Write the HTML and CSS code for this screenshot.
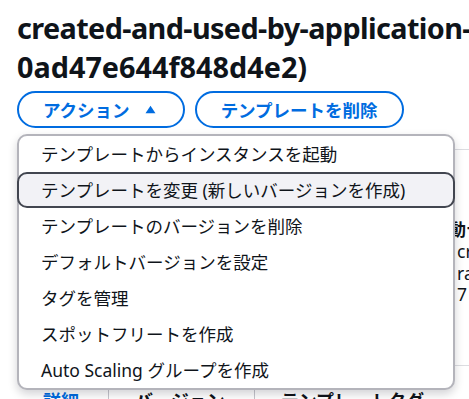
FILE: index.html
```html
<!DOCTYPE html>
<html lang="ja">

<head>
    <meta charset="UTF-8">
    <meta name="viewport" content="width=device-width, initial-scale=1.0">
    <title>起動テンプレート</title>
    <link rel="stylesheet" href="styles.css">
</head>

<body>

    <div class="page">
        <h1 class="title"><span class="title-line">created-and-used-by-application-</span><br>0ad47e644f848d4e2)</h1>

        <div class="actions">
            <button class="btn">
                アクション
                <svg class="caret" width="17" height="17" viewBox="0 0 16 16">
                    <polygon points="3.3,11.5 8,4.5 12.7,11.5" fill="currentColor" />
                </svg>
            </button>
            <button class="btn">テンプレートを削除</button>
        </div>

        <div class="content">
            <!-- Details panel behind the open menu -->
            <div class="panel">
                <h2 class="panel-title">起動テンプレートの詳細</h2>
                <div class="details">
                    <div class="kv">
                        <div class="kv-label">起動テンプレート ID</div>
                        <div class="kv-value">lt-0ad47e644f848d4e2</div>
                    </div>
                    <div class="kv">
                        <div class="kv-label">起動テンプレート名</div>
                        <div class="kv-value">created-and-used-by</div>
                    </div>
                    <div class="kv">
                        <div class="kv-label">起動テンプレートの所有者</div>
                        <div class="kv-list">
                            <div>created-and-used-by-application</div>
                            <div>raw-template</div>
                            <div>7</div>
                        </div>
                    </div>
                </div>
            </div>

            <div class="tabs">
                <div class="tab active">詳細</div>
                <div class="tab">バージョン</div>
                <div class="tab">テンプレートタグ</div>
            </div>

            <!-- Dropdown opened from the action button -->
            <ul class="menu">
                <li class="menu-item">テンプレートからインスタンスを起動</li>
                <li class="menu-item highlighted">テンプレートを変更 (新しいバージョンを作成)</li>
                <li class="menu-item">テンプレートのバージョンを削除</li>
                <li class="menu-item">デフォルトバージョンを設定</li>
                <li class="menu-item">タグを管理</li>
                <li class="menu-item">スポットフリートを作成</li>
                <li class="menu-item">Auto Scaling グループを作成</li>
            </ul>
        </div>
    </div>

</body>

</html>
```

FILE: styles.css
```css
html,
body {
    margin: 0;
    padding: 0;
    overflow: hidden;
}

body {
    font-family: "Noto Sans", "Noto Sans CJK JP", sans-serif;
    color: #0f141a;
    background-color: #ffffff;
}

.page {
    width: 700px;
    padding: 8px 0 0 17px;
}

.title {
    margin: 0;
    font-size: 28.8px;
    line-height: 39px;
    font-weight: 700;
}

.title-line {
    letter-spacing: -0.6px;
}

.actions {
    display: flex;
    gap: 10px;
    margin-top: 5px;
}

.btn {
    display: flex;
    align-items: center;
    gap: 12px;
    height: 37px;
    padding: 0 24px;
    border: 2px solid #006ce0;
    border-radius: 20px;
    background-color: #ffffff;
    color: #006ce0;
    font-family: inherit;
    font-size: 17.5px;
    font-weight: 700;
    line-height: 22px;
    cursor: pointer;
}

.caret {
    display: block;
}

.content {
    position: relative;
    padding-top: 21px;
}

/* Panel behind the menu */
.panel {
    box-sizing: border-box;
    height: 217px;
    padding: 18px 0 0 26px;
    border-top: 1px solid #dcdde1;
    border-bottom: 1px solid #dcdde1;
}

.panel-title {
    margin: 0 0 25px;
    font-size: 17.5px;
    font-weight: 700;
    line-height: 24px;
}

.details {
    display: grid;
    grid-template-columns: 194px 194px 1fr;
}

.kv-label {
    font-size: 17.5px;
    font-weight: 700;
    line-height: 24px;
    white-space: nowrap;
}

.kv-value,
.kv-list {
    font-size: 17.5px;
    line-height: 21.5px;
    white-space: nowrap;
}

.kv-list {
    padding-left: 26px;
}

.tabs {
    display: flex;
    margin-top: 20px;
}

.tab {
    padding: 3px 29px 0 26px;
    font-size: 18px;
    font-weight: 700;
    line-height: 24px;
    white-space: nowrap;
}

.tab + .tab {
    border-left: 1px solid #c6c6cd;
}

.tab.active {
    color: #006ce0;
}

/* Dropdown */
.menu {
    position: absolute;
    top: 6px;
    left: 0;
    box-sizing: border-box;
    width: 438px;
    margin: 0;
    padding: 0;
    list-style: none;
    background-color: #ffffff;
    border: 2px solid #b4b4bb;
    border-radius: 10px;
    box-shadow: 0 4px 10px rgba(0, 7, 22, 0.18);
}

.menu-item {
    box-sizing: border-box;
    height: 36px;
    margin: 0 -2px;
    padding: 5px 22px;
    border: 2px solid transparent;
    border-radius: 10px;
    font-size: 17.5px;
    line-height: 22px;
    white-space: nowrap;
}

.menu-item.highlighted {
    background-color: #f2f2f6;
    border-color: #424650;
}
```
